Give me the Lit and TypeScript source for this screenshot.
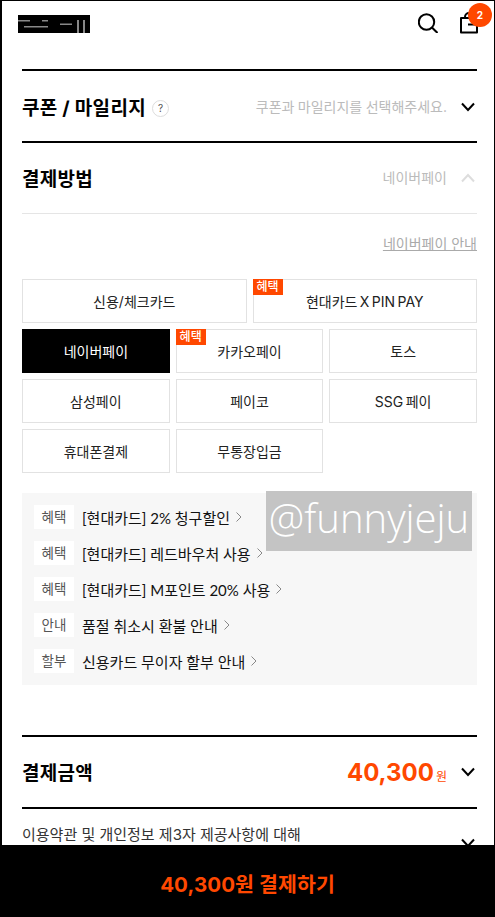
import { LitElement, html, css, svg } from "lit";
import { customElement } from "lit/decorators.js";

const chevronDown = html`<svg class="chev" viewBox="0 0 14 10" width="14" height="10"><path d="M1 1.5 L7 8 L13 1.5" fill="none" stroke="#000" stroke-width="2"/></svg>`;
const chevronUp = html`<svg class="chev" viewBox="0 0 14 10" width="14" height="10"><path d="M1 8.5 L7 2 L13 8.5" fill="none" stroke="#ddd" stroke-width="2"/></svg>`;
const arrow = html`<svg class="arrow" viewBox="0 0 6 10" width="6" height="10"><path d="M.5 .5 L5 5 L.5 9.5" fill="none" stroke="#888" stroke-width="1"/></svg>`;

const methods = [
  { label: "신용/체크카드", span: 3 },
  { label: "현대카드 X PIN PAY", span: 3, badge: true },
  { label: "네이버페이", span: 2, active: true },
  { label: "카카오페이", span: 2, badge: true },
  { label: "토스", span: 2 },
  { label: "삼성페이", span: 2 },
  { label: "페이코", span: 2 },
  { label: "SSG 페이", span: 2 },
  { label: "휴대폰결제", span: 2 },
  { label: "무통장입금", span: 2 },
];

const notices = [
  ["혜택", "[현대카드] 2% 청구할인"],
  ["혜택", "[현대카드] 레드바우처 사용"],
  ["혜택", "[현대카드] M포인트 20% 사용"],
  ["안내", "품절 취소시 환불 안내"],
  ["할부", "신용카드 무이자 할부 안내"],
];

@customElement("app-root")
export class AppRoot extends LitElement {
  static styles = css`
    :host {
      display: block;
      font-family: "Inter", "Noto Sans CJK KR", sans-serif;
      color: #000;
    }
    .page {
      box-sizing: border-box;
      height: 917px;
      overflow: hidden;
      border-top: 1px solid #000;
      border-left: 2px solid #000;
      border-right: 1px solid #000;
      position: relative;
      background: #fff;
    }
    .top {
      height: 68px;
      box-sizing: border-box;
      padding: 14px 0 0 16px;
      display: flex;
      justify-content: space-between;
      align-items: flex-start;
    }
    .logo { display: block; }
    .icons { display: flex; gap: 22px; }
    .search { margin-top: -2px; }
    .bag { position: relative; width: 34px; height: 20px; }
    .bag svg { position: absolute; left: 0; top: -3px; }
    .badge {
      position: absolute;
      left: 8px;
      top: -12px;
      width: 24px;
      height: 24px;
      border-radius: 50%;
      background: #ff4800;
      color: #fff;
      font-size: 10px;
      font-weight: 700;
      display: flex;
      align-items: center;
      justify-content: center;
    }
    .content { padding: 0 17px 0 20px; }
    .row {
      border-top: 2px solid #000;
      height: 70px;
      box-sizing: content-box;
      display: flex;
      align-items: center;
      justify-content: space-between;
      padding-top: 2px;
      margin-bottom: -2px;
    }
    .title {
      font-size: 19px;
      font-weight: 700;
      letter-spacing: 0.3px;
      display: flex;
      align-items: center;
      gap: 6px;
      line-height: 1;
    }
    .help {
      width: 15px;
      height: 15px;
      border: 1px solid #ddd;
      border-radius: 50%;
      font-size: 10px;
      font-weight: 400;
      letter-spacing: 0;
      color: #555;
      display: flex;
      align-items: center;
      justify-content: center;
    }
    .side { display: flex; align-items: center; gap: 14px; padding-right: 2px; }
    .chev { margin-bottom: 2px; }
    .hint { font-size: 14px; color: #bbb; line-height: 1; word-spacing: -0.5px; margin-bottom: 2px; }
    .method-head { margin-bottom: 0; height: 68px; border-bottom: 1px solid #e5e5e5; }
    .guide {
      display: flex;
      justify-content: flex-end;
      padding-top: 20px;
      height: 44px;
      box-sizing: border-box;
      margin-bottom: 21px;
    }
    .guide span {
      font-size: 14px;
      line-height: 20px;
      color: #aaa;
      text-decoration: underline;
    }
    .grid {
      display: grid;
      grid-template-columns: repeat(6, 1fr);
      gap: 6px;
    }
    .m {
      position: relative;
      height: 44px;
      box-sizing: border-box;
      border: 1px solid #e2e2e2;
      display: flex;
      align-items: center;
      justify-content: center;
      font-size: 14px;
      word-spacing: -1.5px;
      color: #222;
    }
    .m.active { background: #000; border-color: #000; color: #fff; }
    .m .tag {
      position: absolute;
      left: 0;
      top: 0;
      margin: -1px 0 0 -1px;
      width: 30px;
      height: 16px;
      background: #ff4800;
      color: #fff;
      font-size: 12px;
      font-weight: 500;
      line-height: 15px;
      text-align: center;
    }
    .notice {
      position: relative;
      margin-top: 20px;
      background: #f7f7f7;
      padding: 12px;
      display: flex;
      flex-direction: column;
      gap: 12px;
    }
    .n { display: flex; align-items: center; height: 24px; }
    .n b {
      width: 40px;
      height: 24px;
      background: #fff;
      color: #555;
      font-size: 13.5px;
      font-weight: 400;
      display: flex;
      align-items: center;
      justify-content: center;
      margin-right: 8px;
      padding-bottom: 2px;
      box-sizing: border-box;
    }
    .n span {
      font-family: "Lato", "Noto Sans CJK KR", sans-serif;
      font-size: 15px;
      color: #111;
      margin-right: 6px;
    }
    .arrow { display: block; }
    .mark {
      position: absolute;
      left: 244px;
      top: -2px;
      width: 206px;
      height: 60px;
      background: #c4c4c4;
      color: #fff;
      font-family: "Open Sans", sans-serif;
      font-size: 40px;
      font-weight: 300;
      line-height: 54px;
      text-align: center;
      white-space: nowrap;
    }
    .sum { margin-top: 50px; margin-bottom: 0; height: 68px; }
    .price { display: flex; align-items: baseline; color: #ff4800; }
    .price strong { font-size: 24px; font-weight: 700; line-height: 1; }
    .price small { font-size: 12px; margin-left: 2px; }
    .terms {
      border-top: 2px solid #000;
      display: flex;
      justify-content: space-between;
      align-items: flex-start;
      padding-top: 16px;
      font-size: 15px;
      line-height: 20px;
      color: #333;
    }
    .terms .chev { margin: 13px 2px 0 0; }
    .pay {
      position: absolute;
      left: -2px;
      right: -1px;
      bottom: 0;
      height: 72px;
      box-sizing: border-box;
      padding-top: 3px;
      background: #000;
      color: #ff4800;
      font-size: 20.5px;
      font-weight: 700;
      letter-spacing: 0.1px;
      display: flex;
      align-items: center;
      justify-content: center;
    }
  `;

  render() {
    return html`<div class="page">
      <div class="top">
        <svg class="logo" width="72" height="18" viewBox="0 0 72 18">
          ${svg`<rect width="72" height="18" fill="#000"/>
          <g fill="#888"><rect x="0" y="5" width="12" height="1.5"/><rect x="24" y="5" width="6" height="1.5"/><rect x="6" y="11" width="24" height="1.5"/><rect x="42" y="8.5" width="12" height="1.5"/><rect x="59" y="5" width="2" height="13"/><rect x="65" y="5" width="2" height="13"/></g>`}
        </svg>
        <div class="icons">
          <svg class="search" width="20" height="20" viewBox="0 0 20 20"><circle cx="8.5" cy="9" r="7.7" fill="none" stroke="#000" stroke-width="2"/><path d="M14.2 14.8 L19.5 20" stroke="#000" stroke-width="2"/></svg>
          <div class="bag">
            <svg width="18" height="22" viewBox="0 0 18 22"><path d="M1 6 H17 V20.500 H1 Z" fill="none" stroke="#000" stroke-width="2" stroke-linejoin="round"/><path d="M5 6 V5 A4 4 0 0 1 13 5 V6" fill="none" stroke="#000" stroke-width="2"/><path d="M8 12.500 H16" stroke="#000" stroke-width="2"/></svg>
            <div class="badge">2</div>
          </div>
        </div>
      </div>
      <div class="content">
        <div class="row">
          <div class="title">쿠폰 / 마일리지 <span class="help">?</span></div>
          <div class="side"><span class="hint">쿠폰과 마일리지를 선택해주세요.</span>${chevronDown}</div>
        </div>
        <div class="row method-head">
          <div class="title">결제방법</div>
          <div class="side"><span class="hint">네이버페이</span>${chevronUp}</div>
        </div>
        <div class="guide"><span>네이버페이 안내</span></div>
        <div class="grid">
          ${methods.map(
            (m) => html`<div class="m ${m.active ? "active" : ""}" style="grid-column: span ${m.span}">
              ${m.badge ? html`<span class="tag">혜택</span>` : ""}${m.label}
            </div>`
          )}
        </div>
        <div class="notice">
          ${notices.map(
            ([t, s]) => html`<div class="n"><b>${t}</b><span>${s}</span>${arrow}</div>`
          )}
          <div class="mark">@funnyjeju</div>
        </div>
        <div class="row sum">
          <div class="title">결제금액</div>
          <div class="side"><span class="price"><strong>40,300</strong><small>원</small></span>${chevronDown}</div>
        </div>
        <div class="terms"><div>이용약관 및 개인정보 제3자 제공사항에 대해</div>${chevronDown}</div>
      </div>
      <div class="pay">40,300원 결제하기</div>
    </div>`;
  }
}
